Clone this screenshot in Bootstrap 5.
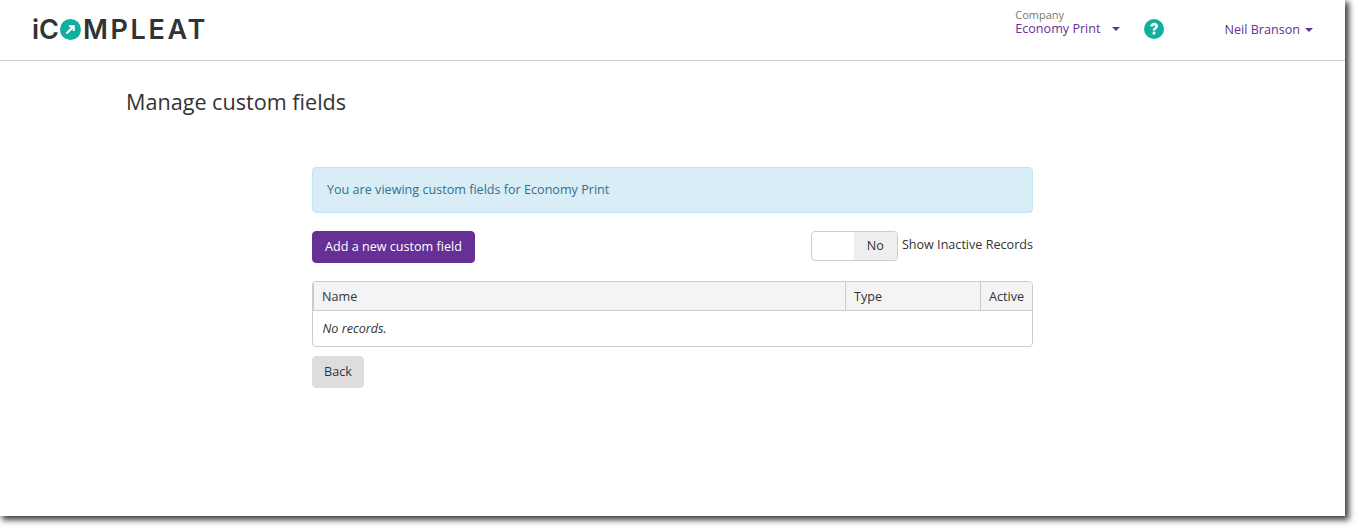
<!DOCTYPE html>
<html lang="en">
<head>
<meta charset="utf-8">
<title>Manage custom fields</title>
<link href="https://cdn.jsdelivr.net/npm/bootstrap@5.3.0/dist/css/bootstrap.min.css" rel="stylesheet">
<style>
html, body { background: #fff; height: 531px; overflow: hidden; }
body { font-family: "Open Sans", "Liberation Sans", sans-serif; font-size: 12.6px; color: #333; }
.sheet { width: 1345px; height: 516px; background: #fff; box-shadow: 3px 3px 6px 1px rgba(0,0,0,.75); }
.topbar { height: 61px; border-bottom: 1px solid #ccc; padding: 0 32px; }
.logo-word { font-family: "Inter", "Liberation Sans", sans-serif; font-weight: 600; font-size: 27px; line-height: 1; color: #333; margin-bottom: 1px; }
.logo-word svg { display: block; margin: 0 2px 0 1px; }
.logo-rest { letter-spacing: 2.65px; }
.co-label { font-size: 11px; line-height: 14px; color: #777; }
.co-name, .user-name { color: #663096; font-size: 12.6px; line-height: 14px; }
.caret-down { display: inline-block; width: 0; height: 0; border-left: 4px solid transparent; border-right: 4px solid transparent; border-top: 4px solid #663096; }
.caret-far { margin-left: 11px; }
.caret-near { margin-left: 5px; }
.co-block { margin-right: 24px; margin-bottom: 16px; }
.help-ico { margin-right: 61px; display: block; margin-bottom: 2px; }
.page-head { font-size: 21.6px; font-weight: 400; line-height: 30px; margin: 26px 0 0 126px; color: #333; }
.main-col { width: 721px; margin: 50px 0 0 312px; }
.note-box { height: 46px; padding: 0 14px; margin-bottom: 18px; font-size: 12.6px; background: #d9edf7; border-color: #bce8f1; color: #31708f; border-radius: 4px; }
.btn-add { background: #663096; border-color: #663096; color: #fff; font-size: 12.6px; height: 32px; padding: 0 12px; border-radius: 4px; font-weight: 500; }
.btn-add:hover { background: #663096; color: #fff; }
.switch-box { width: 87px; height: 30px; border: 1px solid #ccc; border-radius: 4px; overflow: hidden; }
.switch-off { width: 43px; background: #eee; color: #333; font-size: 12.6px; }
.switch-label { margin-left: 4px; font-size: 12.6px; line-height: 28px; }
.grid-wrap { margin-top: 18px; border: 1px solid #ccc; border-radius: 4px; overflow: hidden; height: 66px; }
.grid-tbl { margin: 0; table-layout: fixed; font-size: 12.6px; width: 100%; }
.grid-tbl th { background: #f4f4f4; font-weight: 400; height: 28px; padding: 3px 8px 0; border-bottom: 1px solid #ccc; border-left: 1px solid #ccc; color: #333; vertical-align: middle; }
.grid-tbl td { padding: 3px 9px 0; height: 36px; border: 0; vertical-align: middle; font-style: italic; color: #333; }
.btn-back { margin-top: 9px; background: #ddd; border-color: #ddd; color: #333; font-size: 12.6px; height: 32px; width: 52px; padding: 0; border-radius: 4px; }
</style>
</head>
<body>
<div class="sheet">
  <header class="topbar d-flex align-items-center justify-content-between">
    <div class="logo-word d-flex align-items-center">
      <span>iC</span>
      <svg width="21" height="21" viewBox="0 0 21 21" aria-hidden="true"><circle cx="10.5" cy="10.5" r="10.5" fill="#10b0a0"/><path d="M6.5 14.5 L13.5 7.5 M9 7.2 H13.8 V12" fill="none" stroke="#fff" stroke-width="2"/></svg>
      <span class="logo-rest">MPLEAT</span>
    </div>
    <div class="d-flex align-items-center">
      <div class="co-block">
        <div class="co-label">Company</div>
        <div class="co-name d-flex align-items-center"><span>Economy Print</span><span class="caret-down caret-far"></span></div>
      </div>
      <svg class="help-ico" width="20" height="20" viewBox="0 0 20 20" aria-hidden="true"><circle cx="10" cy="10" r="10" fill="#10b0a0"/><path d="M6.2 7.6 C6.3 5.2 8 3.8 10.2 3.8 C12.4 3.8 14 5.2 14 7.2 C14 9.6 11.4 9.7 11.4 11.6 H8.7 C8.7 8.8 11.2 8.7 11.2 7.4 C11.2 6.8 10.8 6.4 10.1 6.4 C9.5 6.4 9 6.9 8.9 7.6 Z" fill="#fff"/><rect x="8.7" y="12.7" width="2.7" height="2.8" fill="#fff"/></svg>
      <div class="user-name d-flex align-items-center"><span>Neil Branson</span><span class="caret-down caret-near"></span></div>
    </div>
  </header>

  <h1 class="page-head">Manage custom fields</h1>

  <main class="main-col">
    <div class="alert alert-info note-box d-flex align-items-center" role="alert">You are viewing custom fields for Economy Print</div>
    <div class="d-flex justify-content-between align-items-start">
      <button type="button" class="btn btn-add">Add a new custom field</button>
      <div class="d-flex align-items-start">
        <div class="switch-box d-flex justify-content-end"><span class="switch-off d-flex align-items-center justify-content-center">No</span></div>
        <span class="switch-label">Show Inactive Records</span>
      </div>
    </div>
    <div class="grid-wrap">
      <table class="table grid-tbl">
        <colgroup><col style="width:532px"><col style="width:135px"><col></colgroup>
        <thead><tr><th>Name</th><th>Type</th><th>Active</th></tr></thead>
        <tbody><tr><td colspan="3">No records.</td></tr></tbody>
      </table>
    </div>
    <button type="button" class="btn btn-back">Back</button>
  </main>
</div>
<script src="https://cdn.jsdelivr.net/npm/bootstrap@5.3.0/dist/js/bootstrap.bundle.min.js"></script>
</body>
</html>
